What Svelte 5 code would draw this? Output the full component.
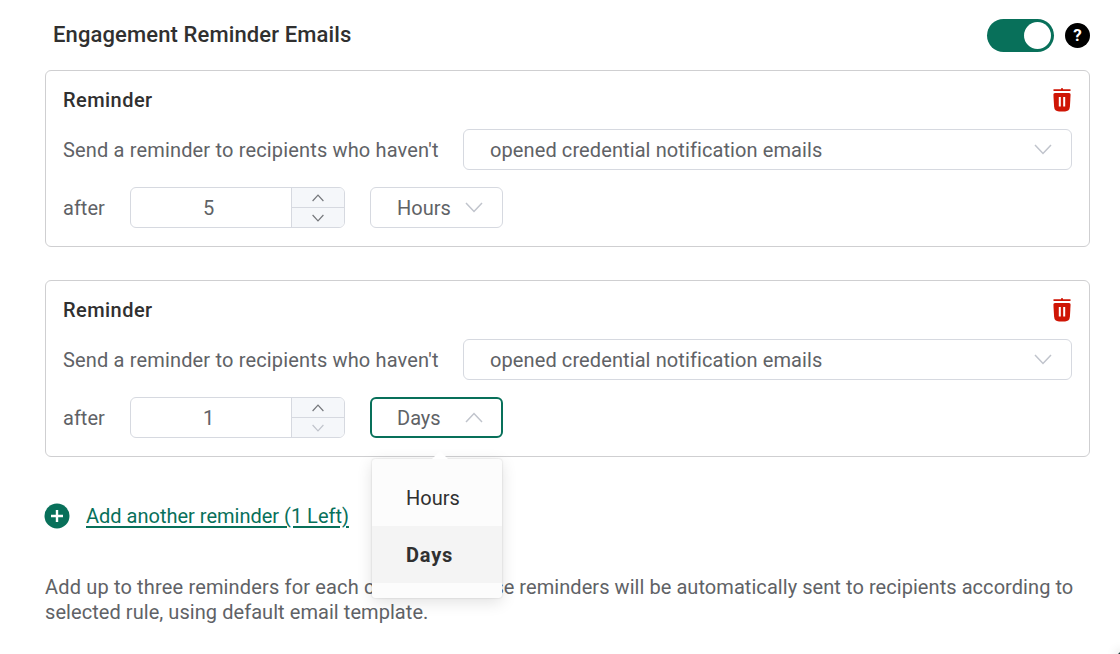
<script lang="ts">
  type Reminder = { id: number; rule: string; amount: number; unit: string };

  const units: string[] = ['Hours', 'Days'];

  let enabled = true;
  let openId: number | null = 2;
  let reminders: Reminder[] = [
    { id: 1, rule: 'opened credential notification emails', amount: 5, unit: 'Hours' },
    { id: 2, rule: 'opened credential notification emails', amount: 1, unit: 'Days' },
  ];

  function step(reminder: Reminder, delta: number): void {
    reminder.amount = Math.max(1, reminder.amount + delta);
    reminders = reminders;
  }

  function removeReminder(id: number): void {
    reminders = reminders.filter((r) => r.id !== id);
  }

  function addReminder(): void {
    if (reminders.length < 3) {
      reminders = [...reminders, { id: Date.now(), rule: 'opened credential notification emails', amount: 1, unit: 'Days' }];
    }
  }

  function pickUnit(reminder: Reminder, unit: string): void {
    reminder.unit = unit;
    reminders = reminders;
    openId = null;
  }
</script>

<div class="page">
  <div class="header">
    <h2>Engagement Reminder Emails</h2>
    <button class="switch" class:on={enabled} aria-label="Toggle reminders" on:click={() => (enabled = !enabled)}>
      <span class="knob"></span>
    </button>
    <span class="help">?</span>
  </div>

  {#each reminders as reminder (reminder.id)}
    <div class="card">
      <div class="card-head">
        <h3>Reminder</h3>
        <button class="trash" aria-label="Delete reminder" on:click={() => removeReminder(reminder.id)}>
          <svg width="18" height="24" viewBox="0 0 18 24">
            <path d="M0.5 1.2H8V0.2H10V1.2H17.5V3H0.5Z" fill="#cf1505" />
            <path d="M2 5H16Q17.7 5 17.6 6.8L16.9 18.5Q16.6 23.4 12 23.4H6Q1.4 23.4 1.1 18.5L0.4 6.8Q0.3 5 2 5Z" fill="#cf1505" />
            <path d="M6.8 9V18.6M11.2 9V18.6" stroke="#fff" stroke-width="2" />
          </svg>
        </button>
      </div>

      <div class="row">
        <span class="label send">Send a reminder to recipients who haven't</span>
        <div class="select rule">
          <span class="rule-text">{reminder.rule}</span>
          <svg class="chevron" width="18" height="11" viewBox="0 0 18 11"><path d="M1 1L9 9.5L17 1" /></svg>
        </div>
      </div>

      <div class="row">
        <span class="label after">after</span>
        <div class="number">
          <span class="value">{reminder.amount}</span>
          <div class="steps">
            <button aria-label="Increase" on:click={() => step(reminder, 1)}>
              <svg width="12" height="8" viewBox="0 0 12 8"><path d="M0.6 7L6 1.2L11.4 7" /></svg>
            </button>
            <button aria-label="Decrease" class:disabled={reminder.amount <= 1} on:click={() => step(reminder, -1)}>
              <svg width="12" height="8" viewBox="0 0 12 8"><path d="M0.6 1L6 6.8L11.4 1" /></svg>
            </button>
          </div>
        </div>
        <div class="unit-wrap">
          <button class="select unit" class:open={openId === reminder.id} on:click={() => (openId = openId === reminder.id ? null : reminder.id)}>
            <span>{reminder.unit}</span>
            <svg class="chevron" width="18" height="11" viewBox="0 0 18 11">
              <path d={openId === reminder.id ? 'M1 10L9 1.5L17 10' : 'M1 1L9 9.5L17 1'} />
            </svg>
          </button>
          {#if openId === reminder.id}
            <div class="menu">
              {#each units as unit}
                <button class="option" class:selected={unit === reminder.unit} on:click={() => pickUnit(reminder, unit)}>{unit}</button>
              {/each}
            </div>
          {/if}
        </div>
      </div>
    </div>
  {/each}

  <button class="add" on:click={addReminder}>
    <svg width="26" height="26" viewBox="0 0 26 26">
      <circle cx="13" cy="13" r="12.5" fill="#08705a" />
      <path d="M13 7V19M7 13H19" stroke="#fff" stroke-width="2.4" />
    </svg>
    <span>Add another reminder ({3 - reminders.length} Left)</span>
  </button>

  <p class="note">
    <span class="lead">Add up to three reminders for each</span> <span class="tight">credential. These</span> reminders will be automatically sent to recipients according to<br />
    selected rule, using default email template.
  </p>
  <div class="corner"></div>
</div>

<style>
  :global(body) {
    background: #fff;
  }

  .page {
    position: relative;
    box-sizing: border-box;
    width: 1120px;
    height: 654px;
    padding: 15px 30px 0 45px;
    overflow: hidden;
    font-family: Roboto, 'Liberation Sans', sans-serif;
    font-size: 20px;
    color: #606266;
  }

  button {
    padding: 0;
    border: none;
    background: none;
    font: inherit;
    color: inherit;
    letter-spacing: inherit;
    cursor: pointer;
  }

  svg {
    display: block;
    flex: none;
  }

  .header {
    display: flex;
    align-items: center;
    height: 40px;
    padding-left: 8px;
    margin-bottom: 15px;
  }

  h2,
  h3 {
    flex: 1;
    margin: 0;
    color: #303030;
    font-weight: 500;
    line-height: 24px;
  }

  h2 {
    font-size: 22px;
    letter-spacing: 0.12px;
  }

  h3 {
    font-size: 20px;
    letter-spacing: 0.45px;
  }

  .switch {
    box-sizing: border-box;
    display: flex;
    align-items: center;
    width: 67px;
    height: 33px;
    padding: 3px;
    margin-right: 11px;
    border-radius: 17px;
    background: #c0c4cc;
  }

  .switch.on {
    justify-content: flex-end;
    background: #08705a;
  }

  .knob {
    width: 27px;
    height: 27px;
    border-radius: 50%;
    background: #fff;
  }

  .help {
    width: 25px;
    height: 25px;
    border-radius: 50%;
    background: #000;
    color: #fff;
    font-size: 17px;
    font-weight: 700;
    line-height: 25px;
    text-align: center;
  }

  .card {
    box-sizing: border-box;
    height: 177px;
    padding: 15px 17px 0;
    margin-bottom: 33px;
    border: 1px solid #cfcfd1;
    border-radius: 6px;
  }

  .card-head {
    display: flex;
    align-items: center;
    height: 28px;
    padding-right: 1px;
    margin-bottom: 15px;
  }

  .row {
    display: flex;
    align-items: center;
    height: 41px;
    margin-bottom: 17px;
  }

  .label {
    flex: none;
    white-space: nowrap;
  }

  .send {
    width: 400px;
    letter-spacing: 0.16px;
  }

  .after {
    width: 67px;
  }

  .select {
    box-sizing: border-box;
    display: flex;
    align-items: center;
    justify-content: space-between;
    height: 41px;
    padding: 0 19px 0 26px;
    border: 1px solid #d6d9e0;
    border-radius: 6px;
    background: #fff;
  }

  .rule {
    flex: 1;
  }

  .rule-text {
    letter-spacing: 0.1px;
  }

  .unit {
    width: 133px;
  }

  .select.open {
    padding: 0 18px 0 25px;
    border: 2px solid #08705a;
  }

  .chevron path {
    fill: none;
    stroke: #c0c4cc;
    stroke-width: 1.5;
  }

  .number {
    box-sizing: border-box;
    display: flex;
    width: 215px;
    height: 41px;
    margin-right: 25px;
    overflow: hidden;
    border: 1px solid #d6d9e0;
    border-radius: 6px;
  }

  .value {
    flex: 1;
    padding-right: 5px;
    line-height: 41px;
    text-align: center;
  }

  .steps {
    display: flex;
    flex-direction: column;
    width: 52px;
    border-left: 1px solid #d6d9e0;
    background: #f5f7fa;
  }

  .steps button {
    display: flex;
    flex: 1;
    align-items: center;
    justify-content: center;
  }

  .steps button + button {
    border-top: 1px solid #d6d9e0;
  }

  .steps path {
    fill: none;
    stroke: #75777b;
    stroke-width: 1.2;
  }

  .steps .disabled path {
    stroke: #c0c4cc;
  }

  .unit-wrap {
    position: relative;
  }

  .menu {
    position: absolute;
    z-index: 10;
    top: 62px;
    left: 2px;
    box-sizing: border-box;
    width: 130px;
    height: 139px;
    padding-top: 10px;
    border-radius: 3px;
    background: #fcfcfc;
    box-shadow: 0 0 2px rgba(0, 0, 0, 0.18), 0 4px 16px rgba(0, 0, 0, 0.12);
  }

  .menu::before {
    content: '';
    position: absolute;
    top: -8px;
    left: 60px;
    border: 8px solid transparent;
    border-top: none;
    border-bottom-color: #fff;
  }

  .option {
    display: block;
    width: 100%;
    height: 57px;
    padding-left: 34px;
    color: #303030;
    text-align: left;
  }

  .option.selected {
    background: #f4f4f4;
    font-weight: 700;
    letter-spacing: 0.8px;
  }

  .add {
    display: flex;
    align-items: center;
    gap: 16px;
    height: 26px;
    margin: 46px 0 0 -1px;
    color: #08705a;
    text-decoration: underline;
    text-underline-offset: 3px;
    white-space: nowrap;
  }

  .note {
    margin: 46px 0 0;
    line-height: 25px;
    letter-spacing: 0.06px;
    white-space: nowrap;
  }

  .lead {
    letter-spacing: 0.16px;
  }

  .tight {
    letter-spacing: -0.1px;
  }

  /* edge of the chat launcher */
  .corner {
    position: absolute;
    right: -5px;
    bottom: -5px;
    width: 7px;
    height: 7px;
    border-radius: 50%;
    background: #1c3a38;
    box-shadow: 0 0 12px rgba(0, 0, 0, 0.3);
  }
</style>
